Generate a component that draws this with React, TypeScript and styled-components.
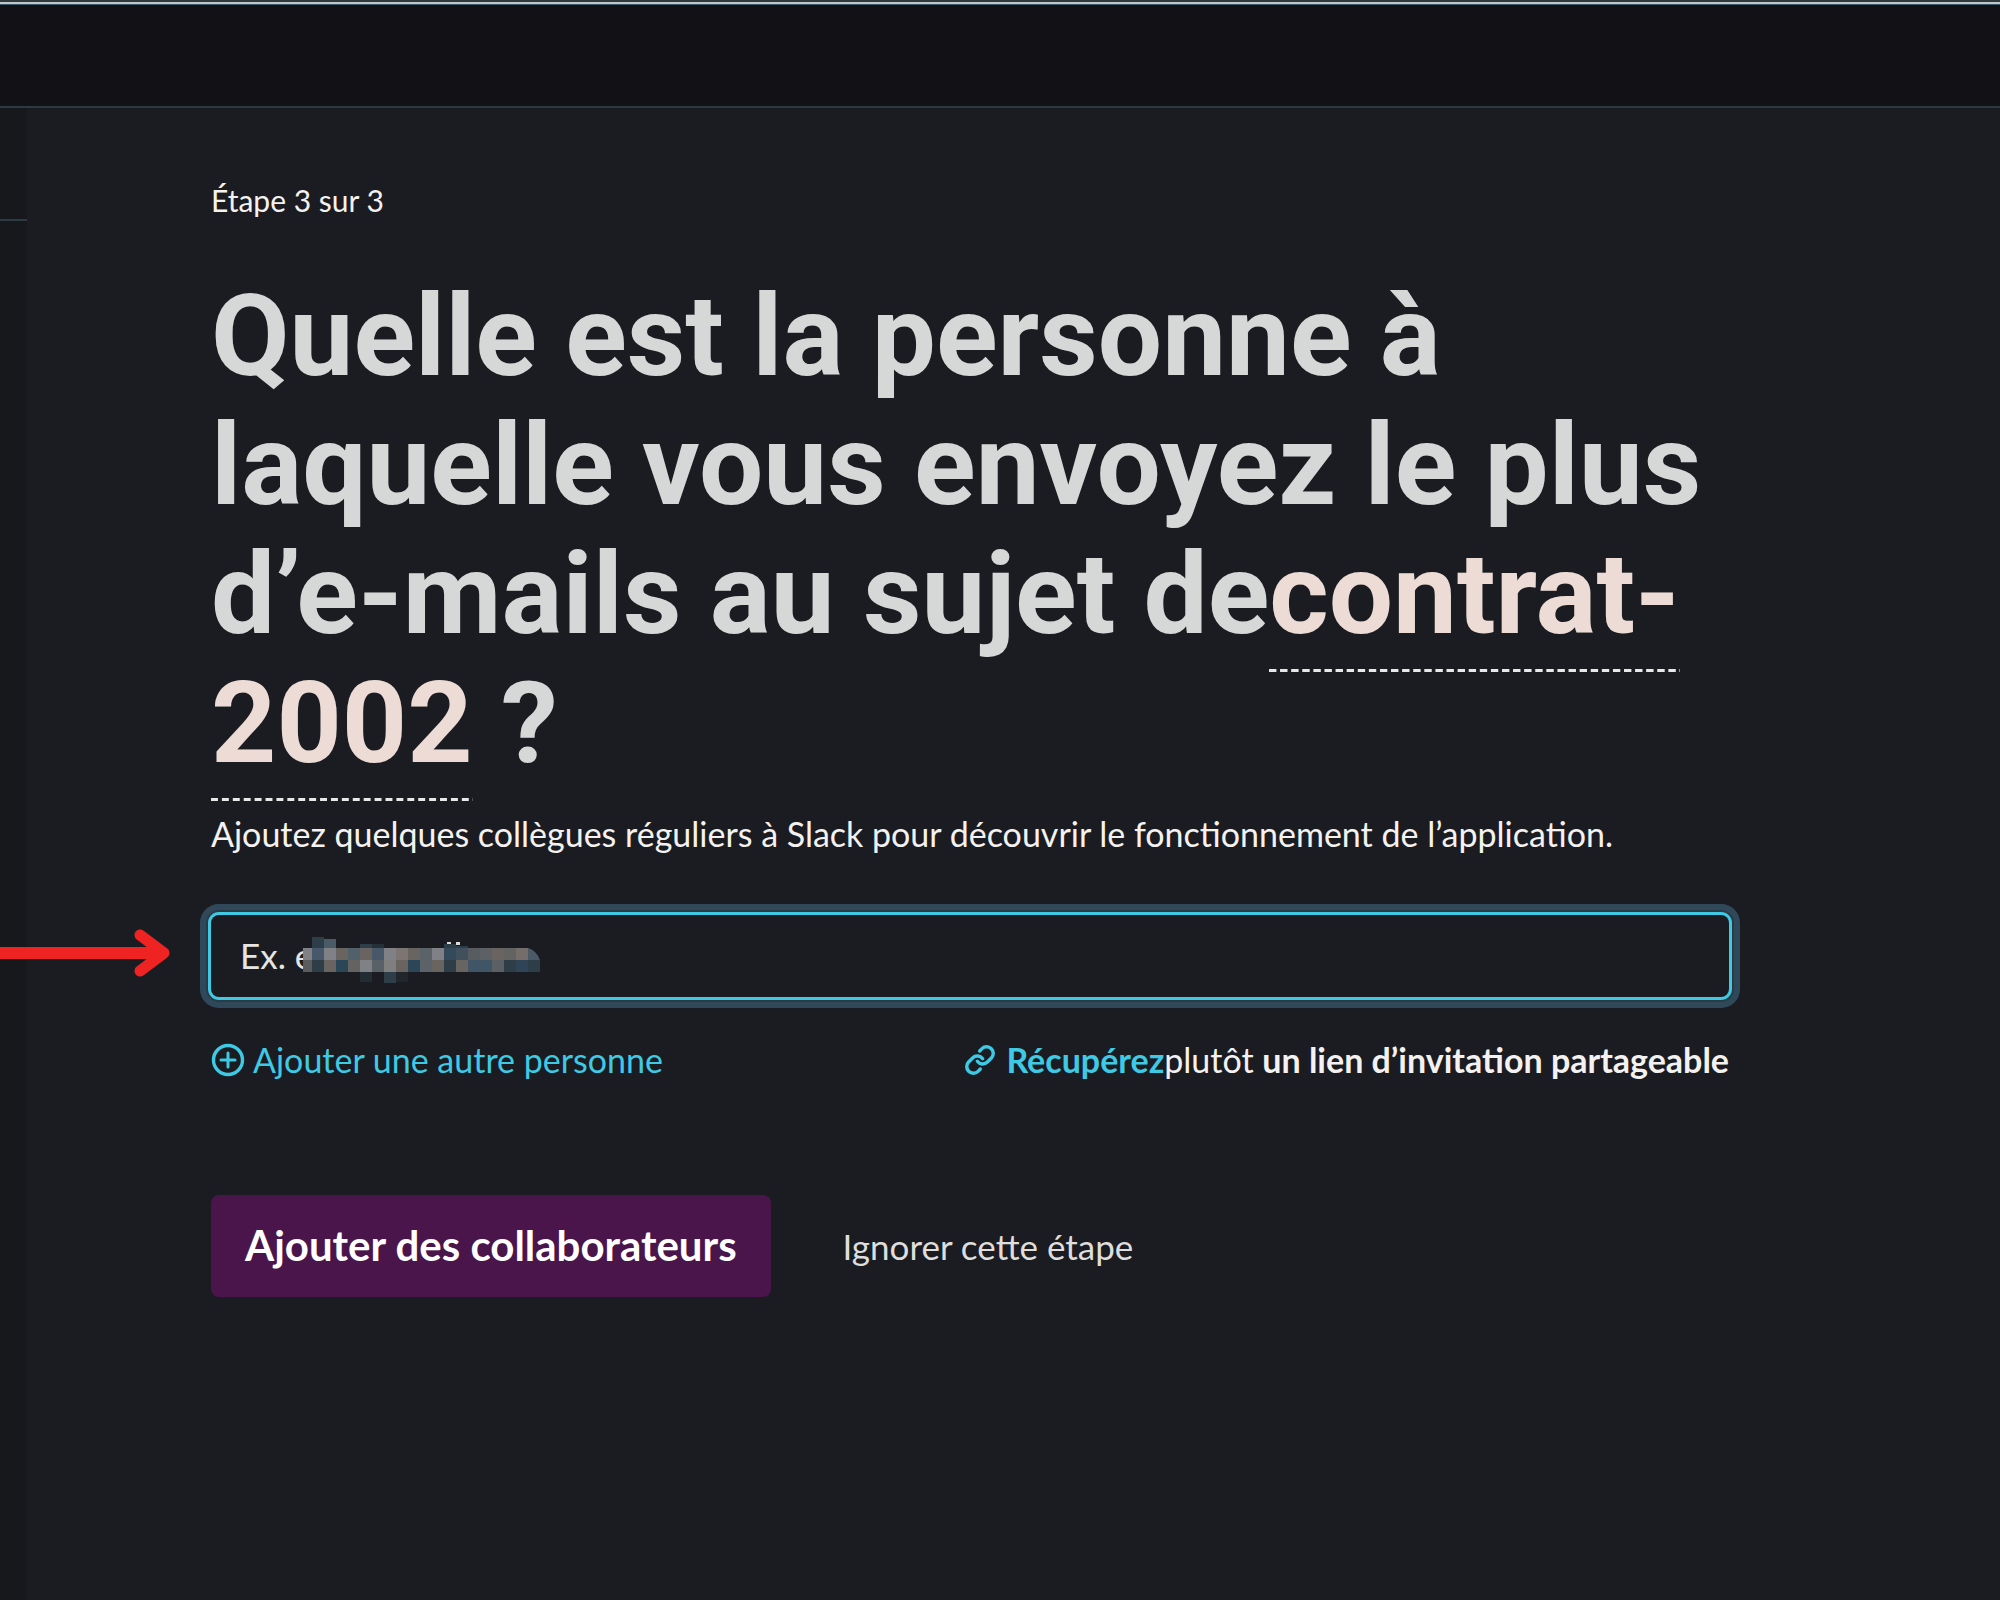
import React from "react";
import styled, { createGlobalStyle } from "styled-components";
import { Link as LinkIcon } from "lucide-react";

const cyan = "#3ec9e4";
const line = "#2c3a44";

const GlobalStyle = createGlobalStyle`
  *, *::before, *::after { box-sizing: border-box; }
  body {
    margin: 0;
    background: #1b1c21;
    color: #f4f2f0;
    font-family: Lato, sans-serif;
  }
`;

const Page = styled.div`
  display: flex;
  flex-direction: column;
  min-height: 100vh;
`;

const TopBar = styled.header`
  height: 108px;
  background: #111116;
  border-top: 2px solid #2f3a3f;
  border-bottom: 2px solid ${line};
  box-shadow: inset 0 2px 0 #c3c8c6, inset 0 3px 0 #3a5a70;
`;

const Body = styled.div`
  display: flex;
  flex: 1;
`;

const Rail = styled.aside`
  flex: none;
  width: 27px;
  background: #17181c;
`;

const RailHead = styled.div`
  height: 113px;
  border-bottom: 2px solid ${line};
`;

const Main = styled.main`
  flex: 1;
  min-width: 0;
  padding: 72px 184px;
`;

const Column = styled.form`
  max-width: 1518px;
`;

const Step = styled.p`
  margin: 0;
  font-size: 30px;
  line-height: 40px;
`;

const Title = styled.h1`
  margin: 52px 0 0;
  font: 700 114px/129px Roboto, sans-serif;
  color: #d6d8d7;
`;

const Channel = styled.span`
  padding-bottom: 11px;
  color: #ecdcd5;
  background-image: linear-gradient(90deg, #e8e8e8 7px, transparent 7px);
  background-position: left bottom;
  background-size: 11px 3px;
  background-repeat: round no-repeat;
`;

const Lead = styled.p`
  margin: 24px 0 0;
  font-size: 34px;
  line-height: 44px;
`;

const Field = styled.div`
  position: relative;
  margin-top: 59px;
`;

const EmailInput = styled.input`
  display: block;
  width: 100%;
  height: 82px;
  padding: 0 29px 3px;
  border: 0;
  border-radius: 8px;
  outline: 0;
  background: #1b1c21;
  box-shadow: 0 0 0 3px ${cyan}, 0 0 0 5px #2b3b45, 0 0 0 11px #30495a;
  color: #f4f2f0;
  font: 400 35px/44px Lato, sans-serif;
  &::placeholder { color: #e6e5e3; opacity: 1; }
`;

const Redaction = styled.svg`
  position: absolute;
  left: 92px;
  top: 22px;
  pointer-events: none;
`;

const Pointer = styled.svg`
  position: absolute;
  right: calc(100% + 40px);
  top: 14px;
  pointer-events: none;
`;

const Options = styled.div`
  display: flex;
  align-items: center;
  justify-content: space-between;
  margin-top: 41px;
`;

const Option = styled.div`
  display: flex;
  align-items: center;
  gap: 10px;
  font-size: 34px;
  line-height: 44px;
`;

const AddButton = styled.button`
  display: flex;
  align-items: center;
  gap: 8px;
  padding: 0;
  border: 0;
  background: none;
  color: ${cyan};
  font: 400 34px/44px Lato, sans-serif;
  cursor: pointer;
`;

const InviteLink = styled.a`
  color: ${cyan};
  font-weight: 700;
  text-decoration: none;
`;

const Actions = styled.div`
  display: flex;
  align-items: center;
  gap: 72px;
  margin-top: 113px;
`;

const Submit = styled.button`
  height: 102px;
  padding: 0 34px 2px;
  border: 0;
  border-radius: 8px;
  background: #4a154b;
  color: #fff;
  font: 700 42px/52px Lato, sans-serif;
  cursor: pointer;
`;

const Skip = styled.button`
  padding: 0;
  border: 0;
  background: none;
  color: #dededd;
  font: 400 35px/44px Lato, sans-serif;
  cursor: pointer;
`;

const D = "#2e3e48";
const G = "#808186";
const B = "#6a6461";
const M = "#46586a";
const upper = [G, M, G, B, "#50616c", B, M, G, "#7d7572", B, "#5b6268", G, "#34495a", "#40505d", "#575c61", "#5d6165", B, "#636362", "#756d6a", "#4a5a66"];
const lower = ["#5c5c5e", D, B, "#2b4656", "#656361", G, "#5a6067", "#7f7f80", B, "#2b4656", "#5b6268", B, D, "#68645f", "#405666", "#405666", "#5b6064", D, "#2f4456", D];
const strays = [
  { x: 9, y: 0, h: 11, fill: D },
  { x: 21, y: 2, h: 9, fill: "#4a5a66" },
  { x: 57, y: 7, h: 4, fill: D },
  { x: 69, y: 7, h: 4, fill: "#252f38" },
  { x: 141, y: 7, h: 4, fill: D },
  { x: 153, y: 9, h: 2, fill: D },
  { x: 57, y: 35, h: 10, fill: "#242c33" },
  { x: 81, y: 35, h: 11, fill: D },
  { x: 93, y: 35, h: 10, fill: "#20262b" },
];

function MosaicPatch() {
  const cell = (fill: string, i: number, y: number) => (
    <rect key={`${y}-${i}`} x={i === 0 ? 0 : i * 12 - 3} y={y} width={i === 0 ? 9 : 12} height={12} fill={fill} />
  );
  return (
    <Redaction width="237" height="46" viewBox="0 0 237 46" aria-hidden="true" shapeRendering="crispEdges">
      <defs>
        <clipPath id="patch">
          <path d="M0 0H170V11H225Q233 13 237 23V46H0Z" />
        </clipPath>
      </defs>
      <g clipPath="url(#patch)">
        {strays.map((s) => <rect key={`${s.x}-${s.y}`} x={s.x} y={s.y} width={12} height={s.h} fill={s.fill} />)}
        {upper.map((c, i) => cell(c, i, 11))}
        {lower.map((c, i) => cell(c, i, 23))}
      </g>
      <rect x="144" y="5" width="4" height="2" fill="#dcdcdc" />
      <rect x="153" y="5" width="4" height="3" fill="#dcdcdc" />
    </Redaction>
  );
}

function PlusCircle() {
  return (
    <svg width="34" height="34" viewBox="0 0 34 34" fill="none" stroke="currentColor" strokeLinecap="round" aria-hidden="true">
      <circle cx="17" cy="17" r="14.5" strokeWidth="3.4" />
      <path d="M17 10V24M10 17H24" strokeWidth="3" />
    </svg>
  );
}

export default function App() {
  return (
    <Page>
      <GlobalStyle />
      <TopBar />
      <Body>
        <Rail>
          <RailHead />
        </Rail>
        <Main>
          <Column onSubmit={(e) => e.preventDefault()}>
            <Step>Étape 3 sur 3</Step>
            <Title>
              Quelle est la personne à laquelle vous envoyez le plus d’e-mails au sujet de
              <Channel>contrat-</Channel><wbr /><Channel>2002</Channel>{"\u00a0"}?
            </Title>
            <Lead>
              <label htmlFor="email">
                Ajoutez quelques collègues réguliers à Slack pour découvrir le fonctionnement de l’application.
              </label>
            </Lead>
            <Field>
              <EmailInput id="email" type="email" placeholder="Ex. e" />
              <MosaicPatch />
              <Pointer width="172" height="50" viewBox="0 0 172 50" fill="none" stroke="#f02323" aria-hidden="true">
                <path d="M0 24H160" strokeWidth="12" />
                <path d="M141 6L165 24L141 42" strokeWidth="11" strokeLinecap="round" strokeLinejoin="round" />
              </Pointer>
            </Field>
            <Options>
              <AddButton type="button">
                <PlusCircle />
                Ajouter une autre personne
              </AddButton>
              <Option>
                <LinkIcon size={32} color={cyan} strokeWidth={2.6} aria-hidden="true" />
                <span>
                  <InviteLink href="#invitation">Récupérez</InviteLink>plutôt <b>un lien d’invitation partageable</b>
                </span>
              </Option>
            </Options>
            <Actions>
              <Submit type="submit">Ajouter des collaborateurs</Submit>
              <Skip type="button">Ignorer cette étape</Skip>
            </Actions>
          </Column>
        </Main>
      </Body>
    </Page>
  );
}
